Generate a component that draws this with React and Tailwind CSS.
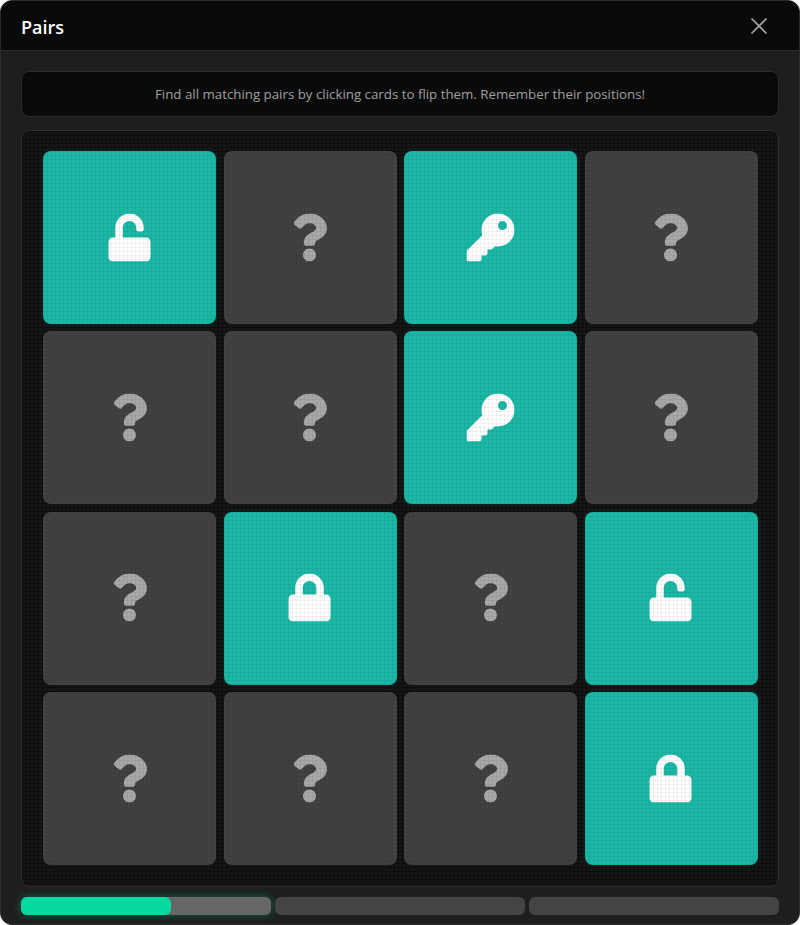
import { FaKey, FaLock, FaUnlock, FaQuestion } from "react-icons/fa";
import { X } from "lucide-react";

const cards = [
  "open", "hidden", "key", "hidden",
  "hidden", "hidden", "key", "hidden",
  "hidden", "lock", "hidden", "open",
  "hidden", "hidden", "hidden", "lock",
];

const icons = { open: FaUnlock, key: FaKey, lock: FaLock };

const cardLines =
  "bg-[linear-gradient(rgba(0,0,0,0.05)_1px,transparent_1px),linear-gradient(90deg,rgba(0,0,0,0.05)_1px,transparent_1px)] bg-[size:4px_4px]";
const boardLines =
  "bg-[linear-gradient(rgba(0,0,0,0.35)_1px,transparent_1px),linear-gradient(90deg,rgba(0,0,0,0.35)_1px,transparent_1px)] bg-[size:4px_4px]";

function Card({ type }) {
  const Icon = icons[type];
  if (type === "hidden") {
    return (
      <div className="relative aspect-square rounded-lg bg-[#414141] shadow-[inset_0_0_0_1px_rgba(255,255,255,0.03)] flex items-center justify-center">
        <FaQuestion className="text-[#a8a8a8] text-[48px] -translate-x-[0.5px] -translate-y-[0.5px]" />
        <div className={`absolute inset-0 rounded-lg ${cardLines}`} />
      </div>
    );
  }
  return (
    <div className="relative aspect-square rounded-lg bg-[#1bb8a6] shadow-[0_0_6px_rgba(26,181,163,0.15)] flex items-center justify-center">
      <Icon className="text-white text-[48px] -translate-x-[0.5px] -translate-y-[0.5px]" />
      <div className={`absolute inset-0 rounded-lg ${cardLines}`} />
    </div>
  );
}

export default function App() {
  return (
    <div className="h-[925px] w-[800px] bg-[#1e1e1e] border border-[#2c2c2c] rounded-xl overflow-hidden font-['Open_Sans',sans-serif]">
      <div className="h-[50px] bg-[#0a0a0a] border-b border-[#2c2c2c] flex items-center justify-between pl-5 pr-[26px]">
        <h1 className="text-white text-lg font-semibold leading-none pt-0.5">Pairs</h1>
        <X className="text-[#a8a8a8]" size={28} strokeWidth={1.5} />
      </div>

      <div className="px-5 pt-5">
        <div className="h-[46px] bg-[#0a0a0a] border border-[#2c2c2c] rounded-lg flex items-center justify-center pt-0.5">
          <p className="text-[#a0a0a0] text-[13.3px]">
            Find all matching pairs by clicking cards to flip them. Remember their positions!
          </p>
        </div>

        <div className={`mt-[13px] border border-[#2e2e2e] rounded-lg bg-[#161616] pl-[21px] pr-5 pt-5 pb-[21px] ${boardLines}`}>
          <div className="grid grid-cols-4 gap-x-[7.67px] gap-y-[7.33px]">
            {cards.map((type, i) => (
              <Card key={i} type={type} />
            ))}
          </div>
        </div>

        <div className="mt-[10px] flex gap-1">
          <div className="flex-1 h-[18px] rounded-md bg-[#666666] shadow-[0_0_8px_rgba(8,217,160,0.4)]">
            <div className="h-full w-[60%] rounded-md bg-[#08d9a0]" />
          </div>
          <div className="flex-1 h-[18px] rounded-md bg-[#444444]" />
          <div className="flex-1 h-[18px] rounded-md bg-[#444444]" />
        </div>
      </div>
    </div>
  );
}
